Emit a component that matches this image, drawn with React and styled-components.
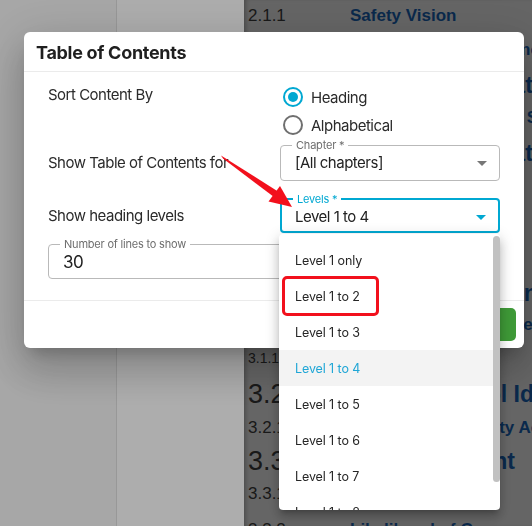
import React from "react";
import styled, { createGlobalStyle, css } from "styled-components";

const GlobalStyle = createGlobalStyle`
  html, body {
    margin: 0;
    padding: 0;
    width: 532px;
    height: 526px;
    overflow: hidden;
    font-family: Inter, "Noto Sans", sans-serif;
  }
  * { box-sizing: border-box; }
`;

const CYAN = "#00a8d2";

/* ---------- document page behind the modal ---------- */

const Page = styled.div`
  display: flex;
  width: 532px;
  height: 526px;
  overflow: hidden;
`;

const Sidebar = styled.aside`
  width: 117px;
  flex: none;
  background: #f6f6f6;
  border-right: 1px solid #e0e0e0;
`;

const NavColumn = styled.nav`
  width: 127px;
  flex: none;
  background: #ffffff;
`;

const DocArea = styled.main`
  flex: 1;
  min-width: 0;
  background: #969696;
  box-shadow: inset 4px 0 4px -2px rgba(0, 0, 0, 0.25);
  padding-left: 4px;
  font-family: "Liberation Sans", Arial, sans-serif;
`;

const DocRow = styled.div`
  display: grid;
  grid-template-columns: 102px max-content;
  align-items: center;
  white-space: nowrap;
  height: ${(p) => p.$h}px;
`;

const DocNumber = styled.span`
  color: #262626;
  font-size: ${(p) => (p.$large ? 27 : p.$tiny ? 14 : 17)}px;
`;

const DocTitle = styled.span`
  color: #0f3d70;
  font-weight: 700;
  font-size: ${(p) => (p.$large ? 23 : 17)}px;
`;

const docRows = [
  { h: 32, n: "2.1.1", t: "Safety Vision" },
  { h: 36, n: "2.1.2", t: "Safety Mission Statement" },
  { h: 34, n: "2.2", t: "Safety Organisation Policies", large: true },
  { h: 32, n: "2.2.1", t: "Policy Statement and Scope –" },
  { h: 38, n: "2.3", t: "Safety Organisation Plan", large: true },
  { h: 34, n: "2.3.1", t: "Roles" },
  { h: 36, n: "2.4", t: "Communication", large: true },
  { h: 34, n: "2.4.1", t: "Briefings" },
  { h: 34, n: "3", t: "Risk Management Process", large: true },
  { h: 30, n: "3.1", t: "Hazard Analysis Process" },
  { h: 36, n: "3.1.1.", t: "Hazard Register", tiny: true },
  { h: 36, n: "3.2", t: "Safety Control Identification", large: true },
  { h: 31, n: "3.2.1", t: "Monitoring of Safety Actions" },
  { h: 36, n: "3.3", t: "Risk Judgment", large: true },
  { h: 30, n: "3.3.1", t: "Severity" },
  { h: 42, n: "3.3.2", t: "Likelihood of Consequences" },
];

/* ---------- modal ---------- */

const Backdrop = styled.div`
  position: fixed;
  inset: 0;
  background: rgba(0, 0, 0, 0.32);
`;

const Dialog = styled.section`
  position: fixed;
  left: 24px;
  top: 32px;
  width: 500px;
  height: 316px;
  background: #fff;
  border-radius: 6px;
  box-shadow: 0 11px 15px -7px rgba(0, 0, 0, 0.2), 0 24px 38px 3px rgba(0, 0, 0, 0.14),
    0 9px 46px 8px rgba(0, 0, 0, 0.12);
  display: flex;
  flex-direction: column;
`;

const DialogTitle = styled.h2`
  margin: 0;
  height: 40px;
  padding: 1px 12px 0;
  display: flex;
  align-items: center;
  font-size: 18px;
  font-weight: 700;
  color: #1f1f1f;
  letter-spacing: -0.3px;
  border-bottom: 1px solid #ebebeb;
`;

const DialogBody = styled.div`
  display: grid;
  grid-template-columns: 232px 220px;
  padding: 11px 24px 0;
  height: 228px;
  align-content: start;
  letter-spacing: -0.5px;
`;

const RowLabel = styled.div`
  font-size: 15px;
  color: #2b2b2b;
  line-height: 24px;
  align-self: ${(p) => (p.$top ? "start" : "center")};
  padding-top: ${(p) => (p.$top ? 0 : p.$shift || 0)}px;
`;

const RadioGroup = styled.div`
  display: flex;
  flex-direction: column;
`;

const RadioItem = styled.label`
  display: flex;
  align-items: center;
  gap: 8px;
  height: 28px;
  padding-left: 3px;
  font-size: 15px;
  color: #2b2b2b;
`;

const RadioCircle = styled.span`
  width: 20px;
  height: 20px;
  border-radius: 50%;
  border: 2px solid ${(p) => (p.$checked ? CYAN : "#6f6f6f")};
  display: grid;
  place-items: center;
  &::after {
    content: "";
    width: 10px;
    height: 10px;
    border-radius: 50%;
    background: ${(p) => (p.$checked ? CYAN : "transparent")};
  }
`;

const Outline = styled.fieldset`
  margin: ${(p) => p.$mt || 0}px 0 0;
  min-width: 0;
  border: ${(p) => (p.$focused ? `2px solid ${CYAN}` : "1px solid #b9b9b9")};
  border-radius: 4px;
  padding: 0 14px ${(p) => (p.$focused ? 2 : p.$pb || 5)}px ${(p) => (p.$focused ? 10 : 11)}px;
  display: flex;
  align-items: center;
  ${(p) =>
    p.$wide &&
    css`
      grid-column: 1 / -1;
    `}
`;

const Legend = styled.legend`
  font-size: 11px;
  line-height: 12px;
  letter-spacing: -0.2px;
  padding: 0 4px;
  margin-left: ${(p) => (p.$focused ? 1 : 0)}px;
  color: ${(p) => (p.$focused ? CYAN : "#6e6e6e")};
`;

const FieldValue = styled.div`
  flex: 1;
  padding-left: 3px;
  line-height: 24px;
  font-size: ${(p) => (p.$big ? 17 : 15)}px;
  color: #222;
`;

const Caret = styled.span`
  width: 0;
  height: 0;
  border-left: 5px solid transparent;
  border-right: 5px solid transparent;
  border-top: 5px solid ${(p) => (p.$focused ? CYAN : "#777")};
  margin-right: -2px;
`;

const DialogActions = styled.footer`
  border-top: 1px solid #ebebeb;
  flex: 1;
  display: flex;
  justify-content: flex-end;
  align-items: center;
  padding: 0 8px;
`;

const ApplyButton = styled.button`
  height: 33px;
  padding: 0 22px;
  border: none;
  border-radius: 5px;
  background: #3f9a38;
  color: #fff;
  font: 600 14px Inter, sans-serif;
`;

/* ---------- open select menu ---------- */

const MenuPaper = styled.div`
  position: fixed;
  left: 279px;
  top: 234px;
  width: 221px;
  height: 276px;
  background: #fff;
  border-radius: 4px;
  box-shadow: 0 5px 5px -3px rgba(0, 0, 0, 0.2), 0 8px 10px 1px rgba(0, 0, 0, 0.14),
    0 3px 14px 2px rgba(0, 0, 0, 0.12);
  overflow: hidden;
`;

const MenuList = styled.ul`
  list-style: none;
  margin: 0;
  padding: 8px 0;
  width: calc(100% - 7px);
`;

const ScrollThumb = styled.div`
  position: absolute;
  right: 0;
  top: 2px;
  width: 7px;
  height: 246px;
  border-radius: 4px;
  background: #c1c1c1;
`;

const MenuItem = styled.li`
  height: 36px;
  display: flex;
  align-items: center;
  padding-left: 16px;
  font-size: 12.5px;
  letter-spacing: -0.1px;
  color: ${(p) => (p.$selected ? "#1fa6d6" : "#262626")};
  background: ${(p) => (p.$selected ? "#f3f3f3" : "transparent")};
`;

/* ---------- review markup ---------- */

const Highlight = styled.div`
  position: fixed;
  left: 282px;
  top: 276px;
  width: 97px;
  height: 40px;
  border: 3px solid #f2101c;
  border-radius: 5px;
`;

const ArrowMark = styled.svg`
  position: fixed;
  left: 0;
  top: 0;
  width: 532px;
  height: 526px;
  pointer-events: none;
`;

const levels = [
  "Level 1 only",
  "Level 1 to 2",
  "Level 1 to 3",
  "Level 1 to 4",
  "Level 1 to 5",
  "Level 1 to 6",
  "Level 1 to 7",
  "Level 1 to 8",
];

export default function App() {
  return (
    <>
      <GlobalStyle />
      <Page>
        <Sidebar />
        <NavColumn />
        <DocArea>
          {docRows.map((r) => (
            <DocRow key={r.n} $h={r.h}>
              <DocNumber $large={r.large} $tiny={r.tiny}>
                {r.n}
              </DocNumber>
              <DocTitle $large={r.large}>{r.t}</DocTitle>
            </DocRow>
          ))}
        </DocArea>
      </Page>

      <Backdrop />

      <Dialog>
        <DialogTitle>Table of Contents</DialogTitle>
        <DialogBody>
          <RowLabel $top>Sort Content By</RowLabel>
          <RadioGroup>
            <RadioItem>
              <RadioCircle $checked />
              Heading
            </RadioItem>
            <RadioItem>
              <RadioCircle />
              Alphabetical
            </RadioItem>
          </RadioGroup>

          <RowLabel $shift={6}>Show Table of Contents for</RowLabel>
          <Outline>
            <Legend>Chapter *</Legend>
            <FieldValue>[All chapters]</FieldValue>
            <Caret />
          </Outline>

          <RowLabel $shift={18}>Show heading levels</RowLabel>
          <Outline $focused $mt={12}>
            <Legend $focused>Levels *</Legend>
            <FieldValue>Level 1 to 4</FieldValue>
            <Caret $focused />
          </Outline>

          <Outline $wide $mt={5} $pb={4}>
            <Legend>Number of lines to show</Legend>
            <FieldValue $big>30</FieldValue>
          </Outline>
        </DialogBody>
        <DialogActions>
          <ApplyButton>Apply</ApplyButton>
        </DialogActions>
      </Dialog>

      <MenuPaper>
        <MenuList>
          {levels.map((l) => (
            <MenuItem key={l} $selected={l === "Level 1 to 4"}>
              {l}
            </MenuItem>
          ))}
        </MenuList>
        <ScrollThumb />
      </MenuPaper>

      <Highlight />
      <ArrowMark viewBox="0 0 532 526">
        <polygon points="221,155.5 223,158.5 274,197 278,191.5" fill="#f2101c" />
        <polygon points="292,207 268.5,201.5 280,186" fill="#f2101c" />
      </ArrowMark>
    </>
  );
}
